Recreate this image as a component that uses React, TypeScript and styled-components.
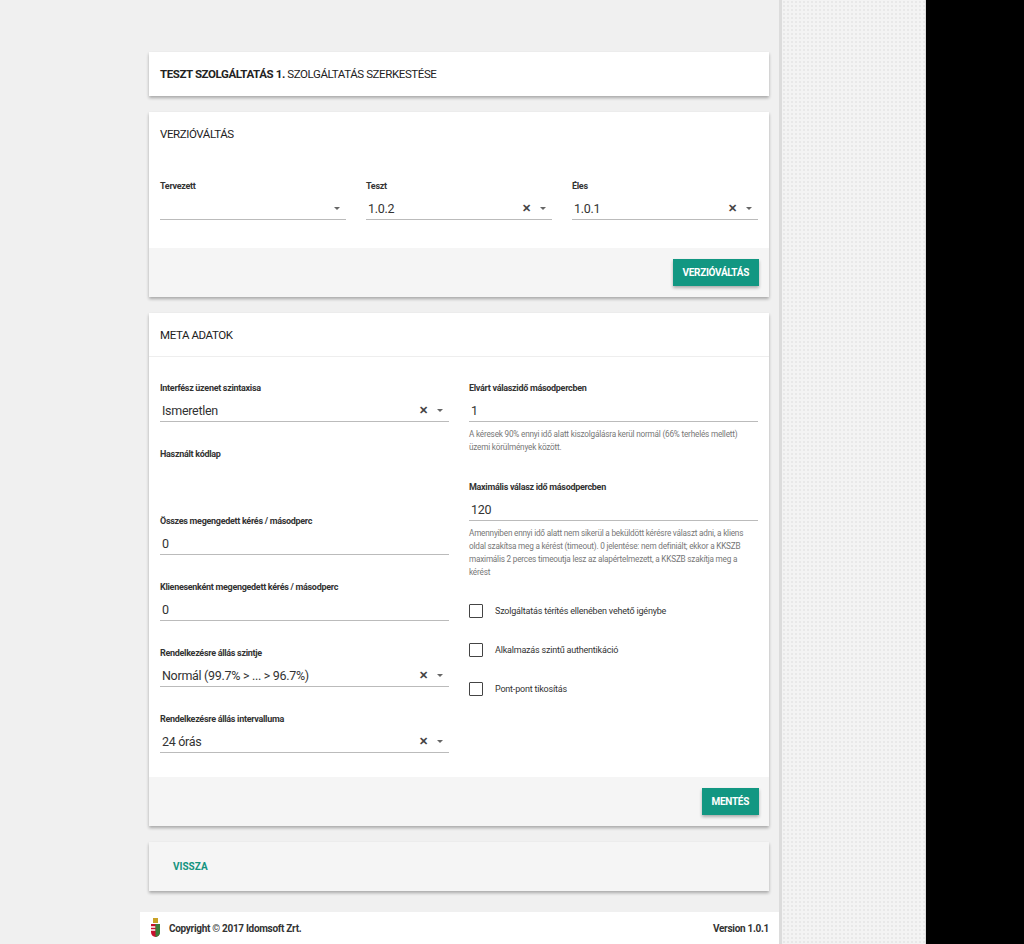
import React from 'react'
import styled, { createGlobalStyle } from 'styled-components'

const Global = createGlobalStyle`
  html, body { margin: 0; padding: 0; }
  body { font-family: Roboto, "Liberation Sans", sans-serif; color: #222; background: #000; }
`

const Page = styled.div`
  display: flex;
  height: 944px;
  overflow: hidden;
`

const Main = styled.div`
  width: 782px;
  background: #f0f0f0;
  border-right: 3px solid #dcdcdc;
  display: flex;
  flex-direction: column;
  padding-top: 52px;
  box-sizing: border-box;
`

const Side = styled.div`
  width: 143px;
  background-color: #f3f3f3;
  background-image: radial-gradient(#e8e8e8 1px, transparent 1px);
  background-size: 4px 4px;
  border-right: 1px solid #ddd;
`

const Card = styled.div<{ $grey?: boolean }>`
  margin: 0 10px 16px 149px;
  background: ${p => (p.$grey ? '#f5f5f5' : '#fff')};
  box-shadow: 0 2px 3px rgba(0, 0, 0, 0.3);
  display: flex;
  flex-direction: column;
`

const Title = styled.div<{ $divider?: boolean }>`
  height: ${p => (p.$divider ? '43px' : '44px')};
  display: flex;
  align-items: center;
  padding: 0 11px;
  font-size: 11.5px;
  letter-spacing: -0.4px;
  border-bottom: ${p => (p.$divider ? '1px solid #eee' : 'none')};
`

const Body = styled.div<{ $top: number }>`
  padding: ${p => p.$top}px 11px 0;
  display: flex;
  gap: 20px;
`

const Col = styled.div`
  flex: 1;
  display: flex;
  flex-direction: column;
`

const Field = styled.div<{ $gap?: number }>`
  display: flex;
  flex-direction: column;
  margin-bottom: ${p => p.$gap ?? 27}px;
`

const Label = styled.div`
  font-size: 9px;
  font-weight: 700;
  color: #333;
  letter-spacing: -0.3px;
  height: 12px;
`

const Input = styled.div`
  margin-top: 4px;
  height: 22px;
  border-bottom: 1px solid #bbb;
  display: flex;
  align-items: center;
  padding-left: 2px;
  font-size: 12.5px;
  color: #333;
  letter-spacing: -0.3px;
`

const Value = styled.span`
  flex: 1;
`

const Clear = styled.span`
  font-size: 11px;
  font-weight: 700;
  color: #444;
  margin-right: 9px;
`

const Caret = styled.span`
  width: 0;
  height: 0;
  border-left: 3px solid transparent;
  border-right: 3px solid transparent;
  border-top: 3px solid #666;
  margin-right: 6px;
`

const Hint = styled.div`
  font-size: 8.2px;
  color: #777;
  line-height: 13px;
  margin-top: 6px;
  letter-spacing: -0.2px;
`

const Check = styled.label`
  display: flex;
  align-items: center;
  gap: 12px;
  font-size: 9px;
  color: #333;
  height: 39px;
  letter-spacing: -0.2px;
`

const Box = styled.span`
  width: 12px;
  height: 12px;
  border: 1.5px solid #444;
  border-radius: 1px;
`

const Footer = styled.div`
  height: 49px;
  background: #f5f5f5;
  display: flex;
  align-items: center;
  justify-content: flex-end;
  padding-right: 10px;
`

const Button = styled.button`
  height: 27px;
  padding: 0 10px;
  background: #129782;
  color: #fff;
  border: none;
  font-family: inherit;
  font-size: 10px;
  font-weight: 700;
  letter-spacing: -0.3px;
  box-shadow: 0 2px 3px rgba(0, 0, 0, 0.3);
`

const BackLink = styled.div`
  height: 49px;
  display: flex;
  align-items: center;
  padding-left: 24px;
  color: #14937f;
  font-size: 10px;
  font-weight: 700;
`

const PageFooter = styled.div`
  margin: auto 0 0 140px;
  height: 32px;
  background: #fff;
  display: flex;
  align-items: center;
  padding: 0 10px;
  font-size: 10px;
  font-weight: 700;
  color: #333;
  letter-spacing: -0.3px;
`

const Grow = styled.span`
  flex: 1;
`

const Select = ({ value, clear }: { value?: string; clear?: boolean }) => (
  <Input>
    <Value>{value}</Value>
    {clear && <Clear>✕</Clear>}
    <Caret />
  </Input>
)

const Crest = () => (
  <svg width="11" height="20" viewBox="0 0 11 20" style={{ marginRight: 8 }}>
    <rect x="3" y="0" width="5" height="5" fill="#c9a227" />
    <path d="M1 6h9v8a4.5 5 0 0 1-9 0z" fill="#c8102e" />
    <path d="M1 9h4.5M1 12h4.5" stroke="#fff" strokeWidth="1.3" />
    <path d="M5.5 6h4.5v8a4.5 5 0 0 1-4.5 5z" fill="#3a7d3a" />
  </svg>
)

export default function App() {
  return (
    <Page>
      <Global />
      <Main>
        <Card>
          <Title>
            <b>TESZT SZOLGÁLTATÁS 1.</b>&nbsp;SZOLGÁLTATÁS SZERKESTÉSE
          </Title>
        </Card>
        <Card>
          <Title>VERZIÓVÁLTÁS</Title>
          <Body $top={25}>
            <Col>
              <Field $gap={28}>
                <Label>Tervezett</Label>
                <Select />
              </Field>
            </Col>
            <Col>
              <Field $gap={28}>
                <Label>Teszt</Label>
                <Select value="1.0.2" clear />
              </Field>
            </Col>
            <Col>
              <Field $gap={28}>
                <Label>Éles</Label>
                <Select value="1.0.1" clear />
              </Field>
            </Col>
          </Body>
          <Footer>
            <Button>VERZIÓVÁLTÁS</Button>
          </Footer>
        </Card>
        <Card>
          <Title $divider>META ADATOK</Title>
          <Body $top={26}>
            <Col>
              <Field>
                <Label>Interfész üzenet szintaxisa</Label>
                <Select value="Ismeretlen" clear />
              </Field>
              <Field $gap={55}>
                <Label>Használt kódlap</Label>
              </Field>
              <Field>
                <Label>Összes megengedett kérés / másodperc</Label>
                <Input>0</Input>
              </Field>
              <Field>
                <Label>Klienesenként megengedett kérés / másodperc</Label>
                <Input>0</Input>
              </Field>
              <Field>
                <Label>Rendelkezésre állás szintje</Label>
                <Select value="Normál (99.7% > ... > 96.7%)" clear />
              </Field>
              <Field $gap={24}>
                <Label>Rendelkezésre állás intervalluma</Label>
                <Select value="24 órás" clear />
              </Field>
            </Col>
            <Col>
              <Field $gap={28}>
                <Label>Elvárt válaszidő másodpercben</Label>
                <Input>1</Input>
                <Hint>
                  A kéresek 90% ennyi idő alatt kiszolgálásra kerül normál (66% terhelés mellett) üzemi
                  körülmények között.
                </Hint>
              </Field>
              <Field $gap={12}>
                <Label>Maximális válasz idő másodpercben</Label>
                <Input>120</Input>
                <Hint>
                  Amennyiben ennyi idő alatt nem sikerül a beküldött kérésre választ adni, a kliens
                  oldal szakítsa meg a kérést (timeout). 0 jelentése: nem definiált; ekkor a KKSZB
                  maximális 2 perces timeoutja lesz az alapértelmezett, a KKSZB szakítja meg a kérést
                </Hint>
              </Field>
              <Check><Box />Szolgáltatás térítés ellenében vehető igénybe</Check>
              <Check><Box />Alkalmazás szintű authentikáció</Check>
              <Check><Box />Pont-pont tikosítás</Check>
            </Col>
          </Body>
          <Footer>
            <Button>MENTÉS</Button>
          </Footer>
        </Card>
        <Card $grey>
          <BackLink>VISSZA</BackLink>
        </Card>
        <PageFooter>
          <Crest />
          <Grow>Copyright © 2017 Idomsoft Zrt.</Grow>
          <span>Version 1.0.1</span>
        </PageFooter>
      </Main>
      <Side />
    </Page>
  )
}
